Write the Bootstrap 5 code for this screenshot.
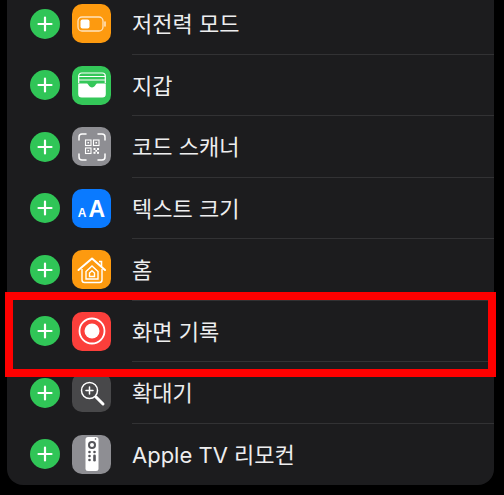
<!DOCTYPE html>
<html lang="ko">
<head>
<meta charset="utf-8">
<title>제어 센터</title>
<link href="https://cdn.jsdelivr.net/npm/bootstrap@5.3.0/dist/css/bootstrap.min.css" rel="stylesheet">
<style>
html,body{margin:0;height:495px;overflow:hidden;background:#000;}
.stage{position:relative;width:504px;height:495px;overflow:hidden;}
.sheet{margin:-7px 10px 0 7px;height:492px;background:#1c1c1e;border-radius:0 0 16px 16px;overflow:hidden;}
.entry{height:61.5px;padding-left:23px;}
.addbtn{width:30px;height:30px;border-radius:50%;background:#30c557;flex:none;margin-right:12px;display:flex;align-items:center;justify-content:center;}
.tile{width:39px;height:39px;border-radius:10px;flex:none;margin-right:21px;display:flex;align-items:center;justify-content:center;}
.tile svg{display:block;}
.orange{background:#fd9a0f;}
.green{background:#34c759;}
.gray{background:#8e8e93;}
.blue{background:#0a7aff;}
.red{background:#fb3f3b;}
.dark{background:#48484a;}
.label{flex:1;height:100%;display:flex;align-items:center;color:#eeeeef;font-family:Inter,"Noto Sans CJK KR","Liberation Sans",sans-serif;font-size:22px;font-weight:400;line-height:1;border-bottom:1px solid #323234;padding-top:2px;white-space:nowrap;}
.label.last{border-bottom:0;}
.aa{font-family:"Liberation Sans",sans-serif;font-weight:700;color:#fff;line-height:1;display:flex;align-items:baseline;gap:2px;padding-top:2px;}
.aa .s1{font-size:12px;}
.aa .s2{font-size:23px;}
.highlight{position:absolute;left:5px;top:292px;width:491px;height:85px;border:8px solid #fe0000;pointer-events:none;}
</style>
</head>
<body>
<div class="stage">
<div class="sheet">

<div class="entry d-flex align-items-center">
<span class="addbtn"><svg width="18" height="18" viewBox="0 0 18 18"><path d="M9 2.5v13M2.5 9h13" stroke="#fff" stroke-width="2.2" stroke-linecap="round"/></svg></span>
<span class="tile orange"><svg width="32" height="18" viewBox="0 0 32 18" fill="none"><rect x="2" y="2" width="25" height="14" rx="4" stroke="#ffe3bd" stroke-width="1.300"/><rect x="4.500" y="4.500" width="9" height="9" rx="2" fill="#fff"/><path d="M29 7v4" stroke="#ffe3bd" stroke-width="1.600" stroke-linecap="round"/></svg></span>
<div class="label">저전력 모드</div>
</div>

<div class="entry d-flex align-items-center">
<span class="addbtn"><svg width="18" height="18" viewBox="0 0 18 18"><path d="M9 2.5v13M2.5 9h13" stroke="#fff" stroke-width="2.2" stroke-linecap="round"/></svg></span>
<span class="tile green"><svg width="30" height="28" viewBox="0 0 30 28" fill="none"><path d="M1.700 12V5a3 3 0 0 1 3-3h20.600a3 3 0 0 1 3 3v7" stroke="#fff" stroke-width="1.200"/><path d="M1.700 5.500h26.600M1.700 9h26.600" stroke="#fff" stroke-width="1.200"/><path d="M1.200 12.500h8.300c1 0 1.500.6 2 1.500 .8 1.500 2.200 2.500 3.500 2.500s2.700-1 3.500-2.500c.5-.9 1-1.500 2-1.500h8.300V23a3.500 3.500 0 0 1-3.500 3.500H4.700A3.500 3.500 0 0 1 1.200 23z" fill="#fff"/></svg></span>
<div class="label">지갑</div>
</div>

<div class="entry d-flex align-items-center">
<span class="addbtn"><svg width="18" height="18" viewBox="0 0 18 18"><path d="M9 2.5v13M2.5 9h13" stroke="#fff" stroke-width="2.2" stroke-linecap="round"/></svg></span>
<span class="tile gray"><svg width="30" height="30" viewBox="0 0 30 30" fill="none" stroke="#fff"><path d="M2 8V5a3 3 0 0 1 3-3h4M21 2h4a3 3 0 0 1 3 3v3M28 22v3a3 3 0 0 1-3 3h-4M9 28H5a3 3 0 0 1-3-3v-3" stroke-width="1.500" stroke-linecap="round"/><g stroke-width="1.100"><rect x="8.500" y="8" width="5.500" height="5.500"/><rect x="16.500" y="8" width="5.500" height="5.500"/><rect x="8.500" y="16" width="5.500" height="5.500"/></g><g fill="#fff" stroke="none"><rect x="10.500" y="10" width="1.500" height="1.500"/><rect x="18.500" y="10" width="1.500" height="1.500"/><rect x="10.500" y="18" width="1.500" height="1.500"/><rect x="16.500" y="16" width="2" height="2"/><rect x="20" y="16" width="2" height="2"/><rect x="18.300" y="18" width="1.800" height="1.800"/><rect x="16.500" y="19.800" width="2" height="2"/><rect x="20" y="19.800" width="2" height="2"/></g></svg></span>
<div class="label">코드 스캐너</div>
</div>

<div class="entry d-flex align-items-center">
<span class="addbtn"><svg width="18" height="18" viewBox="0 0 18 18"><path d="M9 2.5v13M2.5 9h13" stroke="#fff" stroke-width="2.2" stroke-linecap="round"/></svg></span>
<span class="tile blue"><span class="aa"><span class="s1">A</span><span class="s2">A</span></span></span>
<div class="label">텍스트 크기</div>
</div>

<div class="entry d-flex align-items-center">
<span class="addbtn"><svg width="18" height="18" viewBox="0 0 18 18"><path d="M9 2.5v13M2.5 9h13" stroke="#fff" stroke-width="2.2" stroke-linecap="round"/></svg></span>
<span class="tile orange"><svg width="30" height="30" viewBox="0 0 30 30" fill="none" stroke="#fff" stroke-width="1.400"><path d="M1.500 15 15 3.500 28 15" stroke-width="2" stroke-linecap="round" stroke-linejoin="round"/><path d="M22 6.500h2.500v5" stroke-width="1.600"/><path d="M5 14v11a2.500 2.500 0 0 0 2.500 2.500h15A2.500 2.500 0 0 0 25 25V14"/><path d="M9 16.500 15 11l6 5.500V24H9z"/><path d="M12.500 18 15 15.800 17.500 18v3.500h-5z"/></svg></span>
<div class="label">홈</div>
</div>

<div class="entry d-flex align-items-center">
<span class="addbtn"><svg width="18" height="18" viewBox="0 0 18 18"><path d="M9 2.5v13M2.5 9h13" stroke="#fff" stroke-width="2.2" stroke-linecap="round"/></svg></span>
<span class="tile red"><svg width="30" height="30" viewBox="0 0 30 30" fill="none"><circle cx="15" cy="15" r="12.500" stroke="#fff" stroke-width="1.800"/><circle cx="15" cy="15" r="7.500" fill="#fff"/></svg></span>
<div class="label">화면 기록</div>
</div>

<div class="entry d-flex align-items-center">
<span class="addbtn"><svg width="18" height="18" viewBox="0 0 18 18"><path d="M9 2.5v13M2.5 9h13" stroke="#fff" stroke-width="2.2" stroke-linecap="round"/></svg></span>
<span class="tile dark"><svg width="28" height="28" viewBox="0 0 28 28" fill="none" stroke="#fff"><circle cx="11.500" cy="11.500" r="8" stroke-width="1.500"/><path d="M11.500 8v7M8 11.500h7" stroke-width="1.500" stroke-linecap="round"/><path d="M18 18l7 7" stroke-width="3" stroke-linecap="round"/></svg></span>
<div class="label">확대기</div>
</div>

<div class="entry d-flex align-items-center">
<span class="addbtn"><svg width="18" height="18" viewBox="0 0 18 18"><path d="M9 2.5v13M2.5 9h13" stroke="#fff" stroke-width="2.2" stroke-linecap="round"/></svg></span>
<span class="tile gray"><svg width="16" height="36" viewBox="0 0 16 36"><rect x="1.500" y="1" width="13" height="34" rx="2.500" fill="#fff"/><circle cx="8" cy="9" r="4" fill="#55555a"/><circle cx="8" cy="9" r="2" fill="#fff"/><g fill="#55555a"><circle cx="5.500" cy="16" r="1.300"/><circle cx="10.500" cy="16" r="1.300"/><circle cx="5.500" cy="20" r="1.300"/><circle cx="5.500" cy="24" r="1.300"/><rect x="9.200" y="18.500" width="2.600" height="7" rx="1.300"/><circle cx="11.500" cy="3" r=".8"/></g></svg></span>
<div class="label last">Apple TV 리모컨</div>
</div>

</div>
<div class="highlight"></div>
</div>
<script src="https://cdn.jsdelivr.net/npm/bootstrap@5.3.0/dist/js/bootstrap.bundle.min.js"></script>
</body>
</html>
